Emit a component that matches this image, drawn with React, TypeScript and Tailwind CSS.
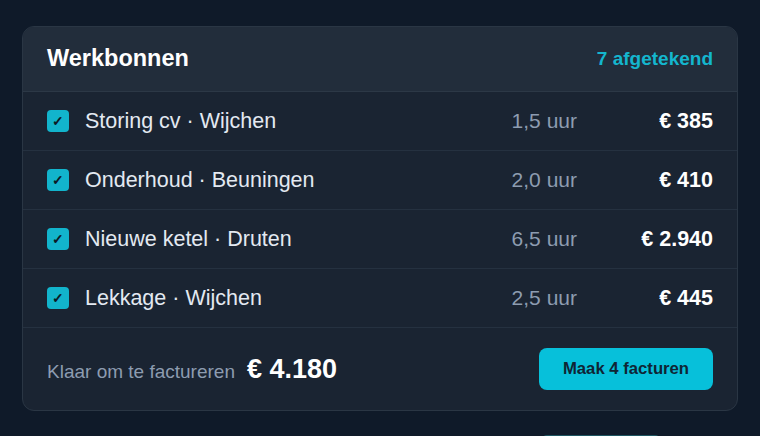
const ROWS = [
  { label: "Storing cv · Wijchen", hours: "1,5 uur", amount: "€ 385" },
  { label: "Onderhoud · Beuningen", hours: "2,0 uur", amount: "€ 410" },
  { label: "Nieuwe ketel · Druten", hours: "6,5 uur", amount: "€ 2.940" },
  { label: "Lekkage · Wijchen", hours: "2,5 uur", amount: "€ 445" },
];

function Check() {
  return (
    <span className="flex h-[22px] w-[22px] shrink-0 items-center justify-center rounded-[4px] bg-[#12b4cc] text-[14px] font-bold leading-none text-[#0c1a26]">
      ✓
    </span>
  );
}

export default function App() {
  return (
    <div
      className="h-[436px] overflow-hidden bg-[#0f1a29] px-[22px] pt-[26px]"
      style={{ fontFamily: '"Liberation Sans", Arial, sans-serif' }}
    >
      <div className="overflow-hidden rounded-[12px] border border-[#2a3644] bg-[#1a2432]">
        {/* Header */}
        <div className="flex h-[65px] items-center justify-between border-b border-[#2c3846] bg-[#222d3b] px-6">
          <h2 className="text-[23.5px] font-bold text-white">Werkbonnen</h2>
          <span className="text-[19px] font-bold text-[#14b6ce]">7 afgetekend</span>
        </div>

        {/* Rows */}
        {ROWS.map((row) => (
          <div
            key={row.label}
            className="flex h-[59px] items-center border-b border-[#253140] px-6"
          >
            <Check />
            <span className="ml-[16px] flex-1 text-[21.5px] text-[#e3e9f1]">{row.label}</span>
            <span className="text-[21px] text-[#8d9cb0]">{row.hours}</span>
            <span className="w-[136px] text-right text-[21.5px] font-bold text-white">
              {row.amount}
            </span>
          </div>
        ))}

        {/* Footer */}
        <div className="flex h-[82px] items-center justify-between px-6">
          <div className="flex items-baseline gap-3">
            <span className="text-[19px] text-[#8d9cb0]">Klaar om te factureren</span>
            <span className="text-[27px] font-bold text-white">€ 4.180</span>
          </div>
          <button className="h-[42px] w-[174px] rounded-[8px] bg-[#07c0da] text-[16.7px] font-bold text-[#0f2535]">
            Maak 4 facturen
          </button>
        </div>
      </div>

      <div className="ml-[519px] mt-6 h-10 w-[120px] rounded-t-[6px] border-t border-[#1e5561] bg-[#123a45]" />
    </div>
  );
}
